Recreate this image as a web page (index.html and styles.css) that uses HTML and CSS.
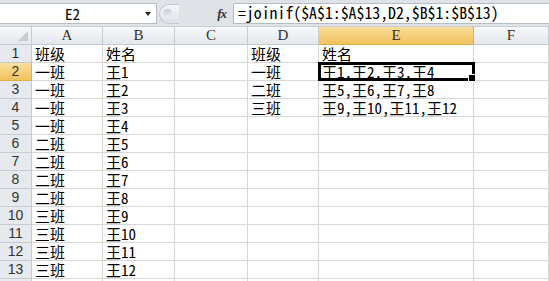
FILE: index.html
```html
<!DOCTYPE html>
<html>
<head>
    <meta charset="utf-8">
    <title>joinif</title>
    <link rel="stylesheet" href="styles.css">
</head>
<body>
    <div class="formula-bar">
        <div class="name-box">
            <span class="name">E2</span>
            <span class="drop"></span>
        </div>
        <div class="bar-tools">
            <span class="grip"><span class="knob"></span></span>
            <span class="fx">fx</span>
        </div>
        <div class="formula">=joinif($A$1:$A$13,D2,$B$1:$B$13)</div>
    </div>

    <div class="sheet">
        <div class="corner"></div>
        <div class="col-head">A</div>
        <div class="col-head">B</div>
        <div class="col-head">C</div>
        <div class="col-head">D</div>
        <div class="col-head on">E</div>
        <div class="col-head">F</div>

        <div class="row-head">1</div>
        <div class="cell">班级</div><div class="cell">姓名</div><div class="cell"></div>
        <div class="cell">班级</div><div class="cell">姓名</div><div class="cell"></div>

        <div class="row-head on">2</div>
        <div class="cell">一班</div><div class="cell">王1</div><div class="cell"></div>
        <div class="cell">一班</div><div class="cell active">王1,王2,王3,王4</div><div class="cell"></div>

        <div class="row-head">3</div>
        <div class="cell">一班</div><div class="cell">王2</div><div class="cell"></div>
        <div class="cell">二班</div><div class="cell">王5,王6,王7,王8</div><div class="cell"></div>

        <div class="row-head">4</div>
        <div class="cell">一班</div><div class="cell">王3</div><div class="cell"></div>
        <div class="cell">三班</div><div class="cell">王9,王10,王11,王12</div><div class="cell"></div>

        <div class="row-head">5</div>
        <div class="cell">一班</div><div class="cell">王4</div><div class="cell"></div>
        <div class="cell"></div><div class="cell"></div><div class="cell"></div>

        <div class="row-head">6</div>
        <div class="cell">二班</div><div class="cell">王5</div><div class="cell"></div>
        <div class="cell"></div><div class="cell"></div><div class="cell"></div>

        <div class="row-head">7</div>
        <div class="cell">二班</div><div class="cell">王6</div><div class="cell"></div>
        <div class="cell"></div><div class="cell"></div><div class="cell"></div>

        <div class="row-head">8</div>
        <div class="cell">二班</div><div class="cell">王7</div><div class="cell"></div>
        <div class="cell"></div><div class="cell"></div><div class="cell"></div>

        <div class="row-head">9</div>
        <div class="cell">二班</div><div class="cell">王8</div><div class="cell"></div>
        <div class="cell"></div><div class="cell"></div><div class="cell"></div>

        <div class="row-head">10</div>
        <div class="cell">三班</div><div class="cell">王9</div><div class="cell"></div>
        <div class="cell"></div><div class="cell"></div><div class="cell"></div>

        <div class="row-head">11</div>
        <div class="cell">三班</div><div class="cell">王10</div><div class="cell"></div>
        <div class="cell"></div><div class="cell"></div><div class="cell"></div>

        <div class="row-head">12</div>
        <div class="cell">三班</div><div class="cell">王11</div><div class="cell"></div>
        <div class="cell"></div><div class="cell"></div><div class="cell"></div>

        <div class="row-head">13</div>
        <div class="cell">三班</div><div class="cell">王12</div><div class="cell"></div>
        <div class="cell"></div><div class="cell"></div><div class="cell"></div>

        <div class="row-head"></div>
        <div class="cell"></div><div class="cell"></div><div class="cell"></div>
        <div class="cell"></div><div class="cell"></div><div class="cell"></div>
    </div>
</body>
</html>
```

FILE: styles.css
```css
* {
    box-sizing: border-box;
}

html, body {
    height: 100%;
    overflow: hidden;
}

body {
    margin: 0;
    padding: 0;
    background-color: white;
    color: black;
    font-family: "Noto Sans Mono CJK SC", "Noto Sans CJK SC", monospace;
    font-size: 15px;
}

/* formula bar */
.formula-bar {
    display: flex;
    height: 27px;
    padding: 3px 0 2px 0;
    background-color: #dfe3e8;
    border-bottom: 1px solid #c9ced5;
}

.name-box {
    width: 157px;
    display: flex;
    align-items: center;
    background-color: white;
    border: 1px solid #b7bdc6;
    border-left: none;
}

.name {
    width: 145px;
    text-align: center;
    line-height: 18px;
}

.drop {
    width: 0;
    height: 0;
    border-left: 3px solid transparent;
    border-right: 3px solid transparent;
    border-top: 4px solid #222;
}

.bar-tools {
    width: 76px;
    display: flex;
    align-items: center;
    justify-content: space-between;
    padding: 0 7px 0 2px;
}

.grip {
    width: 20px;
    height: 20px;
    display: flex;
    align-items: center;
    padding-left: 3px;
    border-radius: 10px 0 0 10px;
    background: linear-gradient(#f3f5f7, #dfe3e8);
    border: 1px solid #c3c9d1;
    border-right: none;
}

.knob {
    width: 9px;
    height: 9px;
    border-radius: 50%;
    background: linear-gradient(#c5cbd2, #eef0f3);
}

.fx {
    font-family: "Liberation Serif", serif;
    font-style: italic;
    font-weight: bold;
    font-size: 13px;
    letter-spacing: -1px;
    color: #333;
}

.formula {
    flex: 1;
    background-color: white;
    border: 1px solid #b7bdc6;
    border-right: none;
    padding-left: 4px;
    line-height: 18px;
    font-size: 15.8px;
    white-space: nowrap;
}

/* sheet grid */
.sheet {
    display: grid;
    grid-template-columns: 32px 71px 72px 73px 71px 155px 1fr;
    grid-auto-rows: 18px;
    height: 254px;
    overflow: hidden;
}

.corner,
.col-head,
.row-head {
    background: linear-gradient(#f7f8fa, #e4e7eb);
    border-right: 1px solid #c6cbd1;
    border-bottom: 1px solid #c6cbd1;
    color: #333;
    text-align: center;
    font-size: 15px;
    line-height: 17px;
}

.col-head {
    font-family: "Liberation Serif", serif;
}

.row-head {
    background: #e6e9ed;
    font-family: "Liberation Sans", sans-serif;
    font-size: 14px;
}

.col-head.on,
.row-head.on {
    background: linear-gradient(#fadf9c, #f2c15c);
    border-color: #e0b050;
}

.corner {
    position: relative;
}

.corner::after {
    content: "";
    position: absolute;
    right: 3px;
    bottom: 3px;
    border-left: 10px solid transparent;
    border-bottom: 10px solid #c8cdd4;
}

.cell {
    border-right: 1px solid #d8d8d8;
    border-bottom: 1px solid #d8d8d8;
    padding: 0 3px;
    line-height: 17px;
    white-space: nowrap;
}

.cell.active {
    position: relative;
    z-index: 1;
}

.cell.active::before {
    content: "";
    position: absolute;
    left: -1px;
    top: -1px;
    right: -2px;
    bottom: -1px;
    border: 3px solid black;
}

.cell.active::after {
    content: "";
    position: absolute;
    right: -3px;
    bottom: -2px;
    width: 6px;
    height: 6px;
    background-color: black;
    border: 1px solid white;
}
```
